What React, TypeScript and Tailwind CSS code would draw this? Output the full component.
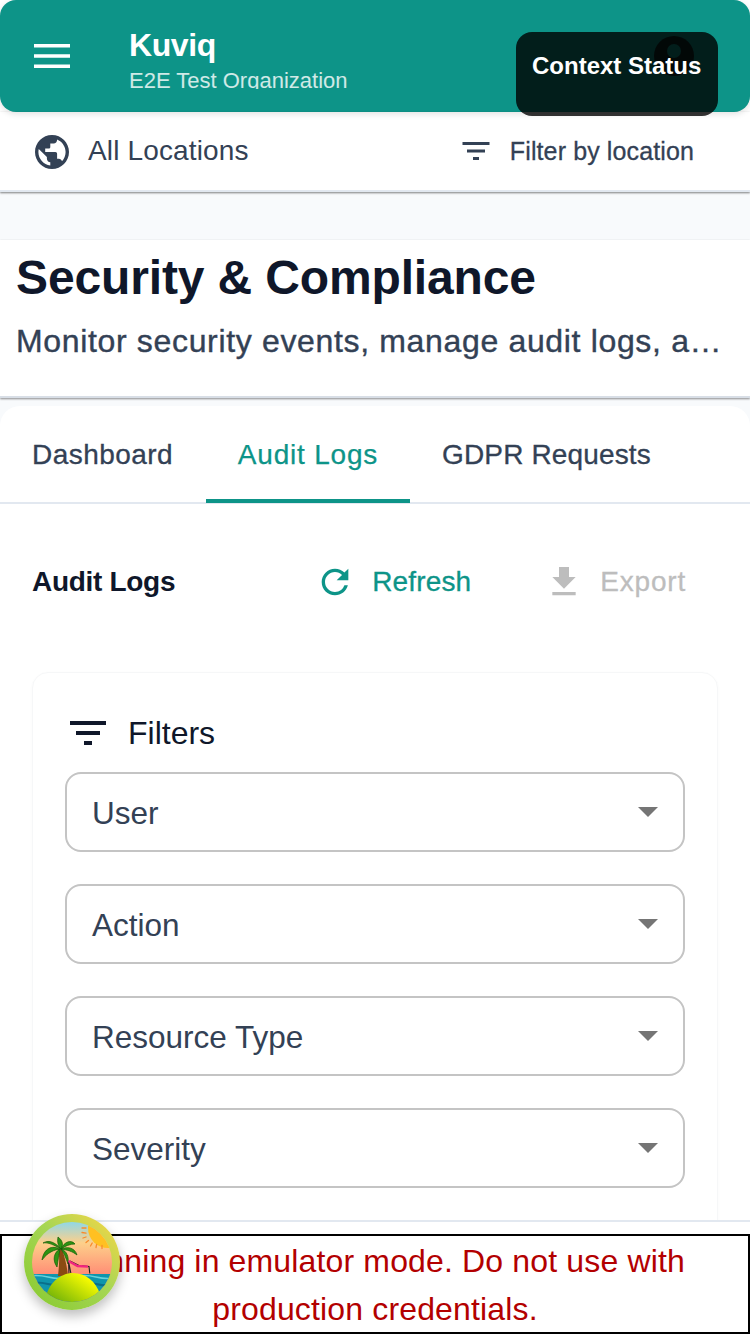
import React from "react";

const FilterIcon = ({ className }: { className: string }) => (
  <svg viewBox="0 0 24 24" className={className} fill="currentColor">
    <path d="M10 18h4v-2h-4v2zM3 6v2h18V6H3zm3 7h12v-2H6v2z" />
  </svg>
);

const Select = ({ label }: { label: string }) => (
  <div className="h-20 rounded-[16px] border-2 border-[#c4c4c4] flex items-center justify-between pl-[25px] pr-[25px] bg-white">
    <span className="text-[31.5px] pt-[3px] text-[#334155]">{label}</span>
    <svg viewBox="0 0 20 10" className="w-5 h-[10px]" fill="#757575">
      <path d="M0 0h20L10 10z" />
    </svg>
  </div>
);

const Logo = () => (
  <svg viewBox="0 0 96 96" className="w-full h-full">
    <defs>
      <linearGradient id="ring" x1="0" y1="1" x2="1" y2="0">
        <stop offset="0" stopColor="#86c92e" />
        <stop offset="0.55" stopColor="#a6d654" />
        <stop offset="1" stopColor="#ffd645" />
      </linearGradient>
      <linearGradient id="sky" x1="0" y1="0" x2="0" y2="1">
        <stop offset="0.05" stopColor="#7fd8f5" />
        <stop offset="0.3" stopColor="#fdd08a" />
        <stop offset="0.62" stopColor="#ff8f76" />
      </linearGradient>
      <linearGradient id="hill" x1="0" y1="1" x2="1" y2="0">
        <stop offset="0.1" stopColor="#5aa60a" />
        <stop offset="0.85" stopColor="#ffff00" />
      </linearGradient>
      <clipPath id="inner">
        <circle cx="48" cy="48" r="40" />
      </clipPath>
    </defs>
    <circle cx="48" cy="48" r="48" fill="url(#ring)" />
    <g clipPath="url(#inner)">
      <rect width="96" height="96" fill="url(#sky)" />
      <circle cx="84" cy="14" r="20" fill="#ffc021" />
      <g stroke="#f98a2c" strokeWidth="1.3" strokeLinecap="round">
        <path d="M58 14h4M58 18.5l4 .6M59 24l3-1M62 28.5l2.500-2M66.500 32l1.700-3M72 33.500l.6-3M78 34.500v-3" />
      </g>
      <rect x="0" y="60" width="96" height="36" fill="#0f95ac" />
      <path d="M0 63q12-3 24 0t24 0 24 0 24 0" stroke="#67d2dc" strokeWidth="1.5" fill="none" />
      <path d="M0 70q12-3 24 0t24 0 24 0 24 0" stroke="#0a6f8a" strokeWidth="2" fill="none" />
      <path d="M34 62 C35 52 36 44 34 35 L38 35 C41 44 43 52 44 62Z" fill="#8a4b12" />
      <g fill="#2e9412" stroke="#145c08" strokeWidth="0.7">
        <path d="M37 35 C30 27 24 26 19 29 C24 28 30 31 37 35Z" />
        <path d="M36 35 C28 31 20 34 18 46 C24 38 30 36 36 35Z" />
        <path d="M36 35 C30 38 28 46 33 53 C34 46 35 40 36 35Z" />
        <path d="M37 35 C40 30 38 26 34 23 C33 28 34 32 37 35Z" />
        <path d="M37 35 C40 28 47 25 51 30 C46 30 41 32 37 35Z" />
        <path d="M37 35 C44 32 51 34 53 41 C48 37 43 36 37 35Z" />
        <path d="M37 35 C43 37 45 43 44 50 C42 44 40 39 37 35Z" />
      </g>
      <path d="M45 60l-.500-13 2.500 13M46 47l9 4.500 10 1 .8 7" fill="none" stroke="#222" strokeWidth="1.1" />
      <path d="M44.500 47l9 5 10.500.6" fill="none" stroke="#f2257f" strokeWidth="2.4" />
      <path d="M21 90C22 70 36 59 49 59C62 59 72 68 76 80L76 96H21Z" fill="url(#hill)" />
    </g>
  </svg>
);

export default function App() {
  return (
    <div className="relative w-[750px] h-[1334px] overflow-hidden bg-white font-['Liberation_Sans',Arial,sans-serif]">
      <header className="h-28 rounded-[16px] bg-[#0d9488] flex items-center pl-[34px] shadow-[0_2px_6px_rgba(0,0,0,0.12)] relative">
        <svg viewBox="0 0 36 24" className="w-9 h-6" fill="#fff">
          <path d="M0 0h36v3.600H0zM0 10.200h36v3.600H0zM0 20.400h36V24H0z" />
        </svg>
        <div className="ml-[59px] flex flex-col mt-[4px]">
          <span className="text-[32px] leading-[36px] font-bold text-white tracking-[-0.4px]">Kuviq</span>
          <span className="mt-[2px] text-[22px] leading-[32px] h-[24px] overflow-hidden text-white/80">E2E Test Organization</span>
        </div>
        <div className="absolute left-[654px] top-[36px] w-10 h-10 rounded-full bg-[#0b0f0e]/80 flex items-start justify-center pt-2">
          <div className="w-[14px] h-[14px] rounded-full bg-[#0d9488]" />
        </div>
      </header>

      <div className="h-[80px] flex items-center justify-between pl-[35px] pr-[56px] border-b-2 border-[#e2e8f0] shadow-[0_1px_2px_rgba(0,0,0,0.5)] relative">
        <div className="flex items-center gap-[19px]">
          <svg viewBox="2 2 20 20" className="w-[34px] h-[34px] mt-[2px]" fill="#334155">
            <path d="M12 2C6.480 2 2 6.480 2 12s4.480 10 10 10 10-4.480 10-10S17.520 2 12 2zm-1 17.930c-3.950-.490-7-3.850-7-7.930 0-.620.080-1.210.210-1.790L9 15v1c0 1.100.900 2 2 2v1.930zm6.900-2.540c-.260-.810-1-1.390-1.900-1.390h-1v-3c0-.550-.450-1-1-1H8v-2h2c.550 0 1-.450 1-1V7h2c1.100 0 2-.900 2-2v-.410c2.930 1.190 5 4.060 5 7.410 0 2.080-.800 3.970-2.100 5.390z" />
          </svg>
          <span className="text-[28px] text-[#334155] tracking-[0.15px]">All Locations</span>
        </div>
        <div className="flex items-center gap-[15px]">
          <FilterIcon className="w-9 h-9 text-[#334155] -translate-x-px" />
          <span className="text-[25px] tracking-[0.12px] mt-[2px] [-webkit-text-stroke:0.3px] text-[#334155]">Filter by location</span>
        </div>
      </div>

      <div className="h-[48px] bg-[#f8fafc]" />

      <section className="h-[158px] px-4 pt-[8px] border-b-2 border-[#d8dee6] shadow-[0_1px_2px_rgba(0,0,0,0.45)] relative">
        <h1 className="text-[48px] leading-[60px] font-bold text-[#0f172a] tracking-[-0.14px]">Security &amp; Compliance</h1>
        <p className="mt-[11px] text-[32px] leading-[44px] tracking-[0.66px] [-webkit-text-stroke:0.4px] text-[#334155] truncate w-[718px]">
          Monitor security events, manage audit logs, and handle GDPR requests
        </p>
      </section>

      <div className="pt-[8px] bg-[#f8fafc]">
        <div className="rounded-t-[20px] bg-white h-[820px]">
          <nav className="h-[98px] border-b-2 border-[#e2e8f0] flex">
            <div className="w-[206px] pl-[32px] pt-[29px] text-[28px] leading-[40px] tracking-[0.45px] [-webkit-text-stroke:0.3px] text-[#334155]">Dashboard</div>
            <div className="w-[204px] h-[97px] flex justify-center pt-[29px] text-[28px] leading-[40px] tracking-[0.8px] [-webkit-text-stroke:0.25px] text-[#0d9488] border-b-4 border-[#0d9488]">Audit Logs</div>
            <div className="pl-[32px] pt-[29px] text-[28px] leading-[40px] tracking-[0.15px] [-webkit-text-stroke:0.3px] text-[#334155]">GDPR Requests</div>
          </nav>

          <div className="h-[155px] flex items-center pl-[32px] pr-[64px]">
            <h2 className="text-[28px] font-bold text-[#0f172a] flex-1 tracking-[-0.3px]">Audit Logs</h2>
            <div className="flex items-center gap-[17px] text-[#0d9488]">
              <svg viewBox="0 0 24 24" className="w-10 h-10" fill="currentColor">
                <path d="M17.650 6.350A7.958 7.958 0 0 0 12 4c-4.420 0-7.990 3.580-7.990 8s3.570 8 7.990 8c3.730 0 6.840-2.550 7.730-6h-2.080A5.990 5.990 0 0 1 12 18c-3.310 0-6-2.690-6-6s2.690-6 6-6c1.660 0 3.140.690 4.220 1.780L13 11h7V4l-2.350 2.350z" />
              </svg>
              <span className="text-[28px] tracking-[0.15px] [-webkit-text-stroke:0.3px]">Refresh</span>
            </div>
            <div className="flex items-center gap-[16px] ml-[73px] text-[#bdbdbd]">
              <svg viewBox="0 0 24 24" className="w-10 h-10" fill="currentColor">
                <path d="M19 9h-4V3H9v6H5l7 7 7-7zM5 18v2h14v-2H5z" />
              </svg>
              <span className="text-[28px] tracking-[0.8px] [-webkit-text-stroke:0.3px]">Export</span>
            </div>
          </div>

          <div className="mt-[13px] mx-[32px] h-[600px] rounded-[16px] border border-[#f6f7f8] shadow-[0_1px_3px_rgba(0,0,0,0.03)] px-[32px] pt-[38px]">
            <div className="flex items-center gap-[16px] h-[44px]">
              <FilterIcon className="w-12 h-12 shrink-0 text-[#0f172a] -ml-px" />
              <span className="text-[32px] text-[#0f172a]">Filters</span>
            </div>
            <div className="mt-[17px] flex flex-col gap-8">
              <Select label="User" />
              <Select label="Action" />
              <Select label="Resource Type" />
              <Select label="Severity" />
            </div>
          </div>
        </div>
      </div>

      <div className="absolute left-[516px] top-[32px] w-[202px] h-[84px] rounded-[16px] bg-black/80 pt-4 pl-4 text-[24px] leading-[36px] font-bold text-white whitespace-nowrap">
        Context Status
      </div>

      <div className="absolute left-0 right-0 top-[1220px] h-[114px] bg-white border-t-2 border-[#e2e8f0] pt-[12px]">
        <div className="h-[100px] border-2 border-black bg-white text-center text-[32px] leading-[48px] tracking-[0.15px] text-[#b30000] py-[1px] px-4">
          Running in emulator mode. Do not use with production credentials.
        </div>
      </div>

      <div className="absolute left-[24px] top-[1214px] w-[96px] h-[96px] rounded-full shadow-[0_6px_12px_rgba(0,0,0,0.25)]">
        <Logo />
      </div>
    </div>
  );
}
